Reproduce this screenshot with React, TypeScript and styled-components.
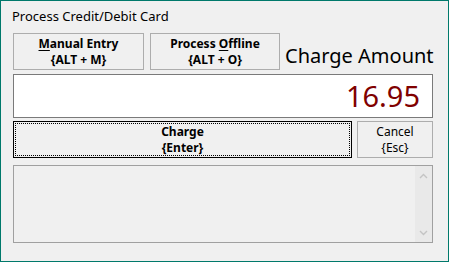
import React, { useState } from 'react'
import styled, { createGlobalStyle } from 'styled-components'

const GlobalStyle = createGlobalStyle`
    html, body {
        margin: 0;
        padding: 0;
        background: #f0f0f0;
    }
    * {
        box-sizing: border-box;
    }
`;

const ScrollArrow = ({ down }: { down?: boolean }) => (
    <svg width="9" height="6" viewBox="0 0 9 6">
        <path
            d={down ? 'M1 1 L4.5 4.5 L8 1' : 'M1 5 L4.5 1.5 L8 5'}
            fill="none"
            stroke="#c4c4c4"
            strokeWidth="1.4"
        />
    </svg>
)

const App = () => {
    const [amount] = useState('16.95');

    return (
        <>
            <GlobalStyle />
            <Window>
                <Title>Process Credit/Debit Card</Title>
                <TopRow>
                    <DialogButton $bold $width={131}>
                        <Line><u>M</u>anual Entry</Line>
                        <Line>{'{ALT + M}'}</Line>
                    </DialogButton>
                    <DialogButton $bold $width={130}>
                        <Line>Process <u>O</u>ffline</Line>
                        <Line>{'{ALT + O}'}</Line>
                    </DialogButton>
                    <AmountLabel>Charge Amount</AmountLabel>
                </TopRow>
                <AmountBox>{amount}</AmountBox>
                <ActionRow>
                    <DialogButton $bold $default>
                        <FocusRect>
                            <Line>Charge</Line>
                            <Line>{'{Enter}'}</Line>
                        </FocusRect>
                    </DialogButton>
                    <DialogButton $width={76}>
                        <Line>Cancel</Line>
                        <Line>{'{Esc}'}</Line>
                    </DialogButton>
                </ActionRow>
                <MessageList>
                    <ListBody />
                    <ScrollBar>
                        <ScrollArrow />
                        <ScrollArrow down />
                    </ScrollBar>
                </MessageList>
            </Window>
        </>
    )
}

const Window = styled.div`
    width: 449px;
    height: 262px;
    border: 1px solid #00796b;
    background: #f0f0f0;
    padding: 6px 15px 0 12px;
    display: flex;
    flex-direction: column;
    font-family: "Noto Sans", "Open Sans", sans-serif;
    color: #000;
`;

const Title = styled.div`
    font-size: 13px;
    line-height: 18px;
    margin-left: -1px;
    height: 26px;
`;

const TopRow = styled.div`
    display: flex;
    align-items: flex-end;
    gap: 6px;
    height: 37px;
`;

const DialogButton = styled.button<{ $bold?: boolean; $default?: boolean; $width?: number }>`
    height: 37px;
    flex: ${p => (p.$width ? `0 0 ${p.$width}px` : '1 1 auto')};
    border: 1px solid ${p => (p.$default ? '#000' : '#adadad')};
    background: #f0f0f0;
    padding: ${p => (p.$default ? '1px' : '0')};
    margin: 0;
    display: flex;
    flex-direction: column;
    align-items: center;
    justify-content: center;
    font-family: inherit;
    font-size: 12px;
    font-weight: ${p => (p.$bold ? 700 : 400)};
    color: #000;
    cursor: pointer;
    u {
        text-decoration-thickness: 1px;
        text-underline-offset: 2px;
    }
`;

const Line = styled.span`
    display: block;
    line-height: 16px;
    white-space: nowrap;
`;

const FocusRect = styled.div`
    width: 100%;
    height: 100%;
    border: 1px dotted #000;
    display: flex;
    flex-direction: column;
    align-items: center;
    justify-content: center;
`;

const AmountLabel = styled.div`
    flex: 1;
    font-size: 20px;
    line-height: 26px;
    white-space: nowrap;
    margin-bottom: 1px;
    margin-left: -1px;
`;

const AmountBox = styled.div`
    margin-top: 4px;
    height: 44px;
    border: 1px solid #7a7a7a;
    background: #fff;
    text-align: right;
    padding-right: 12px;
    font-size: 29px;
    line-height: 42px;
    color: #800000;
`;

const ActionRow = styled.div`
    display: flex;
    gap: 5px;
    margin-top: 3px;
`;

const MessageList = styled.div`
    margin-top: 7px;
    height: 78px;
    border: 1px solid #a0a0a0;
    background: #f0f0f0;
    display: flex;
`;

const ListBody = styled.div`
    flex: 1;
`;

const ScrollBar = styled.div`
    width: 17px;
    background: #e9e9e9;
    display: flex;
    flex-direction: column;
    align-items: center;
    justify-content: space-between;
    padding: 7px 0 6px;
`;

export default App
